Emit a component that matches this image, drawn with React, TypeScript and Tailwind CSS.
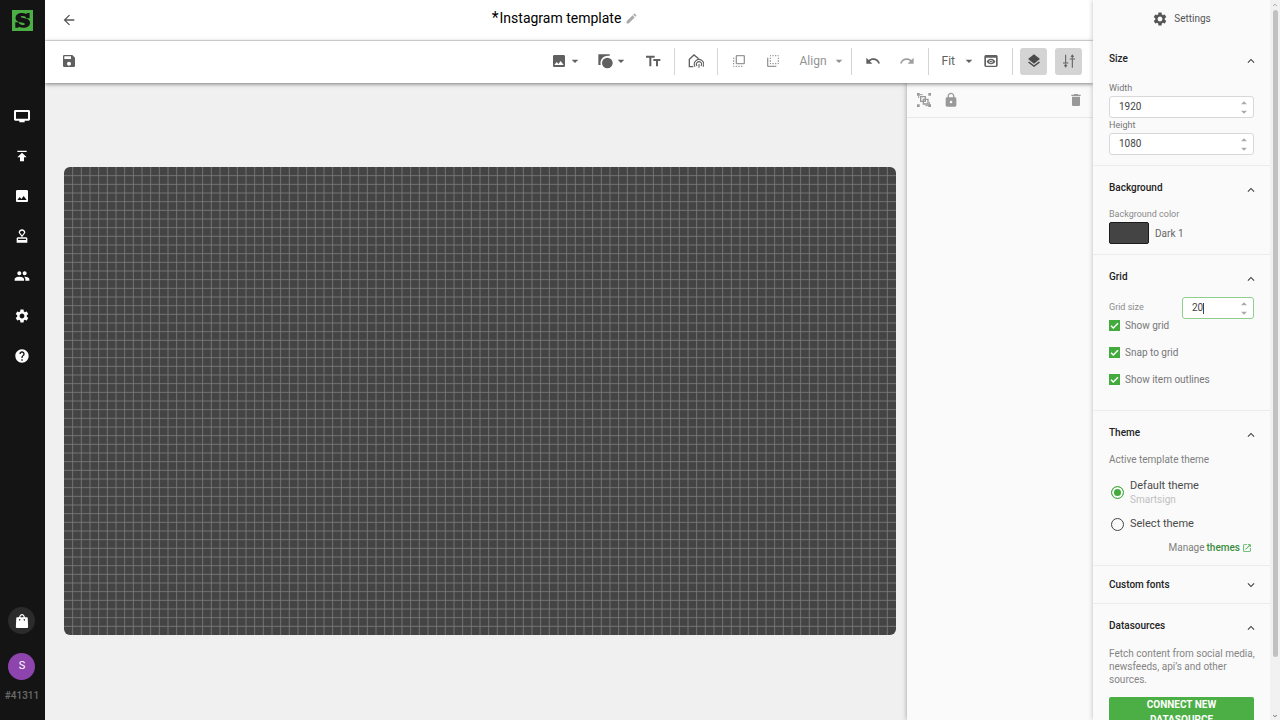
import { useState, type ReactNode } from "react";
import {
  MdArrowBack,
  MdArrowDropDown,
  MdArrowDropUp,
  MdDelete,
  MdEdit,
  MdExpandLess,
  MdExpandMore,
  MdFlipToBack,
  MdFlipToFront,
  MdHelp,
  MdImage,
  MdLaunch,
  MdLayers,
  MdLock,
  MdOutlineApproval,
  MdPeople,
  MdPublish,
  MdRedo,
  MdSave,
  MdSettings,
  MdUndo,
} from "react-icons/md";

const GRID = 20;
const CANVAS_WIDTH = 1920;
const CANVAS_HEIGHT = 1080;

const Logo = () => (
  <svg className="size-[21px]" viewBox="0 0 21 21">
    <rect width="21" height="21" fill="#4caf45" />
    <path
      d="M17.600 3v5.200h-3.200c-.5-1.500-1.900-2.300-3.700-2.300-1.300 0-1.900.4-1.900.9 0 .7.8.9 3.600 1.400 3.700.6 5.600 1.900 5.600 4.600 0 3.200-2.700 5-6.800 5-1.700 0-3.100-.4-4.300-1l-.7.9H3.300v-5.400h3.300c.6 1.700 2.200 2.700 4.200 2.700 1.300 0 2-.4 2-1 0-.7-.9-.9-3.500-1.400C5.500 11.900 3.500 10.700 3.500 8c0-3.100 2.700-5 6.500-5 1.700 0 3.100.4 4.300 1l.8-1z"
      fill="#141414"
    />
  </svg>
);

const ScreenIcon = () => (
  <svg className="size-4" viewBox="0 0 24 24" fill="currentColor">
    <path d="M22 3H2C1 3 0 4 0 5v12c0 1 .9 2 2 2h6v2.500h8V19h6c1 0 2-1 2-2V5c0-1-1-2-2-2zm-1 13H3V6h18z" />
  </svg>
);

const BagIcon = () => (
  <svg className="size-4" viewBox="0 0 24 24" fill="currentColor">
    <path d="M19 6.500h-2.600C16 3.700 14.200 1.500 12 1.500S8 3.700 7.600 6.500H5c-1 0-1.500.7-1.600 1.500L2.800 20.500c0 1.200.8 2 2 2h14.400c1.200 0 2-.8 2-2L20.600 8c0-.8-.6-1.500-1.600-1.500zM12 3.500c1.200 0 2.200 1.300 2.500 3h-5c.3-1.700 1.300-3 2.500-3zM8.500 11.500c-.8 0-1.200-.6-1.200-1.300s.4-1.200 1.200-1.200 1.200.5 1.200 1.200-.4 1.300-1.200 1.300zm7 0c-.8 0-1.200-.6-1.200-1.300s.4-1.200 1.200-1.200 1.200.5 1.200 1.200-.4 1.300-1.200 1.300z" />
  </svg>
);

const ShapeIcon = () => (
  <svg className="size-4" viewBox="0 0 24 24" fill="currentColor">
    <path d="M2 2h17v2.500C10 3 4 9.500 5.500 18H2z" />
    <circle cx="15.500" cy="15" r="8" />
  </svg>
);

const TextIcon = () => (
  <svg className="size-4" viewBox="0 0 24 24" fill="currentColor">
    <path d="M1.500 4v3h5v13h3V7h5V4zM12.500 9v3h4v8h3v-8H23V9z" />
  </svg>
);

const HomeSignalIcon = () => (
  <svg className="size-4" viewBox="0 0 24 24" fill="none" stroke="currentColor">
    <path d="M8 20.500H2V9.500L9 3l7 5.500" strokeWidth="2" />
    <g strokeWidth="1.600">
      <path d="M10.500 20.500a7 7 0 1 1 12 0" />
      <path d="M13.500 19.500a3.900 3.900 0 1 1 6 0" />
      <path d="M16.500 16.500V22" />
    </g>
  </svg>
);

const PreviewIcon = () => (
  <svg className="size-4" viewBox="0 0 24 24" fill="currentColor">
    <path
      fillRule="evenodd"
      d="M4.500 3h15C20.900 3 22 4 22 5.200v13.600c0 1.200-1.100 2.200-2.500 2.200h-15C3.100 21 2 20 2 18.800V5.200C2 4 3.100 3 4.500 3zM4.500 7v12h15V7zM12 8.500c3 0 5.300 1.600 6.500 4.300-1.200 2.700-3.500 4.200-6.500 4.200s-5.300-1.500-6.500-4.200C6.700 10.100 9 8.500 12 8.500zm0 1.800a2.600 2.600 0 1 0 0 5.200 2.600 2.600 0 0 0 0-5.200z"
    />
    <circle cx="12" cy="12.900" r="1.500" />
  </svg>
);

const AdjustIcon = () => (
  <svg className="size-4" viewBox="0 0 24 24" fill="none" stroke="currentColor" strokeWidth="1.600">
    <path d="M7 2.500v12M3 15h8M7 16v4M17 22V9.500M13 9h8M17 8V4" />
    <path d="M5 18.500h4l-2 3zM15 5.500h4l-2-3z" fill="currentColor" strokeWidth="1" />
  </svg>
);

const GroupIcon = () => (
  <svg className="size-4" viewBox="0 0 24 24" fill="none" stroke="currentColor" strokeWidth="2">
    <path d="M7 7h7v7H7zM11 11h7v7h-7z" />
    <path d="M5 4h5M4 5v4M20 15v5M14 20.500h6" strokeWidth="1.500" />
    <path
      d="M1.500 1.500h4v4h-4zM18.500 1.500h4v4h-4zM1.500 18.500h4v4h-4zM18.500 18.500h4v4h-4z"
      fill="currentColor"
      stroke="none"
    />
  </svg>
);

const navItems = [
  { label: "Screens", icon: <ScreenIcon /> },
  { label: "Publish", icon: <MdPublish size={16} /> },
  { label: "Media", icon: <MdImage size={16} /> },
  { label: "Approvals", icon: <MdOutlineApproval size={16} /> },
  { label: "Users", icon: <MdPeople size={16} /> },
  { label: "Settings", icon: <MdSettings size={16} /> },
  { label: "Help", icon: <MdHelp size={16} /> },
];

const Sidebar = () => (
  <nav className="flex w-[45px] shrink-0 flex-col items-center bg-[#141414] pt-[10px] pr-px pb-[18px] text-white">
    <a href="#" aria-label="Home">
      <Logo />
    </a>
    <ul className="mt-[77px] flex flex-col gap-6">
      {navItems.map(({ label, icon }) => (
        <li key={label}>
          <a href="#" aria-label={label} className="block">
            {icon}
          </a>
        </li>
      ))}
    </ul>
    <div className="mt-auto flex flex-col items-center">
      <button aria-label="Store" className="flex size-[27px] items-center justify-center rounded-full bg-[#2b2b2b]">
        <BagIcon />
      </button>
      <button className="mt-[19px] size-[27px] rounded-full bg-[#8e44ad] text-[11px]">S</button>
      <span className="mt-[10px] text-[10px] leading-[12px] font-medium text-[#6b6b6b]">#41311</span>
    </div>
  </nav>
);

const Header = () => (
  <header className="flex h-[41px] shrink-0 items-center border-b border-[#e4e4e4] bg-white px-4">
    <button aria-label="Back" className="text-[#555]">
      <MdArrowBack size={16} />
    </button>
    <div className="flex flex-1 items-center justify-center pr-6 pb-1">
      <h1 className="flex gap-px text-[14px] leading-5 text-black">
        <span className="text-[16px]">*</span>
        Instagram template
      </h1>
      <button aria-label="Rename" className="ml-1 text-[#aaa]">
        <MdEdit size={13} />
      </button>
    </div>
  </header>
);

const Divider = () => <div className="h-[27px] w-px bg-[#d4d4d4]" />;

const Toolbar = () => (
  <div className="relative z-10 flex h-[42px] shrink-0 items-center justify-between bg-white pr-[11px] pb-[2px] pl-4 text-[#606060] shadow-[0_1px_4px_rgba(0,0,0,0.5)]">
    <button aria-label="Save">
      <MdSave size={16} />
    </button>
    <div className="flex items-center">
      <button aria-label="Add media" className="flex items-center">
        <MdImage size={16} />
        <MdArrowDropDown size={16} />
      </button>
      <button aria-label="Add shape" className="ml-[14px] flex items-center">
        <ShapeIcon />
        <MdArrowDropDown size={16} />
      </button>
      <button aria-label="Add text" className="mr-[13px] ml-4">
        <TextIcon />
      </button>
      <Divider />
      <button aria-label="Add widget" className="mx-[13px]">
        <HomeSignalIcon />
      </button>
      <Divider />
      <button aria-label="Bring to front" className="ml-[13px] text-[#999]">
        <MdFlipToFront size={16} />
      </button>
      <button aria-label="Send to back" className="ml-[18px] text-[#999]">
        <MdFlipToBack size={16} />
      </button>
      <button className="ml-[18px] flex items-center gap-1 text-[12px] text-[#929292]">
        Align
        <MdArrowDropDown size={16} />
      </button>
      <div className="mr-[13px] ml-1">
        <Divider />
      </div>
      <button aria-label="Undo">
        <MdUndo size={16} />
      </button>
      <button aria-label="Redo" className="mr-[13px] ml-[18px] text-[#a0a0a0]">
        <MdRedo size={16} />
      </button>
      <Divider />
      <button className="ml-[13px] flex items-center gap-[6px] text-[12px]">
        Fit
        <MdArrowDropDown size={16} />
      </button>
      <button aria-label="Preview" className="mr-[13px] ml-[6px]">
        <PreviewIcon />
      </button>
      <Divider />
      <button aria-label="Layers" className="ml-[7px] flex size-[27px] items-center justify-center rounded-[3px] bg-[#d4d4d4] text-[#4a4a4a]">
        <MdLayers size={16} />
      </button>
      <button aria-label="Properties" className="ml-2 flex size-[27px] items-center justify-center rounded-[3px] bg-[#d4d4d4]">
        <AdjustIcon />
      </button>
    </div>
  </div>
);

const Canvas = () => {
  const columns = Array.from({ length: CANVAS_WIDTH / GRID - 1 }, (_, i) => (i + 1) * GRID);
  const rows = Array.from({ length: CANVAS_HEIGHT / GRID - 1 }, (_, i) => (i + 1) * GRID);

  return (
    <main className="flex min-w-0 flex-1 items-center bg-[#f0f0f0] pr-[11px] pb-[2px] pl-[19px]">
      <svg className="w-full rounded-[6px] bg-[#444]" viewBox={`0 0 ${CANVAS_WIDTH} ${CANVAS_HEIGHT}`}>
        <g stroke="#7b7b7b" strokeWidth="2">
          {columns.map((x) => (
            <line key={x} x1={x} x2={x} y1="0" y2={CANVAS_HEIGHT} />
          ))}
          {rows.map((y) => (
            <line key={y} x1="0" x2={CANVAS_WIDTH} y1={y} y2={y} />
          ))}
        </g>
      </svg>
    </main>
  );
};

const LayersPanel = () => (
  <aside className="w-[186px] shrink-0 bg-[#fafafa] shadow-[0_0_5px_rgba(0,0,0,0.35)]">
    <div className="flex h-[35px] items-center border-b border-[#e8e8e8] px-[9px] text-[#999]">
      <button aria-label="Group">
        <GroupIcon />
      </button>
      <button aria-label="Lock" className="ml-[11px]">
        <MdLock size={16} />
      </button>
      <button aria-label="Delete" className="ml-auto">
        <MdDelete size={16} />
      </button>
    </div>
  </aside>
);

type SectionProps = {
  title: string;
  className?: string;
  children: ReactNode;
};

const Section = ({ title, className = "", children }: SectionProps) => (
  <section className={`border-b border-[#ececec] px-4 pt-[11px] ${className}`}>
    <div className="flex h-5 items-center justify-between">
      <h2 className="text-[10px] font-medium text-[#222]">{title}</h2>
      <button aria-label={`Collapse ${title}`} className="-mr-1 pt-[5px] text-[#444]">
        <MdExpandLess size={14} />
      </button>
    </div>
    {children}
  </section>
);

type NumberInputProps = {
  id: string;
  initial: string;
  active?: boolean;
};

const NumberInput = ({ id, initial, active }: NumberInputProps) => {
  const [value, setValue] = useState(initial);

  return (
    <div className={`relative flex h-[22px] items-center rounded-[3px] border bg-white ${active ? "border-[#8fce8c]" : "border-[#d8d8d8]"}`}>
      <input
        id={id}
        type="number"
        value={value}
        onChange={(e) => setValue(e.target.value)}
        className="w-full min-w-0 appearance-none bg-transparent pl-[9px] text-[10px] leading-4 text-[#444] outline-none [appearance:textfield] [&::-webkit-inner-spin-button]:appearance-none"
      />
      {active && <span className="absolute left-5 h-[11px] w-px bg-[#444]" />}
      <div className="absolute right-[2px] flex flex-col text-[#aaa]">
        <button aria-label="Increase" className="flex h-[9px] items-center">
          <MdArrowDropUp size={14} />
        </button>
        <button aria-label="Decrease" className="flex h-[9px] items-center">
          <MdArrowDropDown size={14} />
        </button>
      </div>
    </div>
  );
};

const Checkbox = ({ label }: { label: string }) => (
  <label className="flex h-3 items-center gap-[5px] text-[10px] text-[#777]">
    <span className="relative flex size-[11px]">
      <input type="checkbox" defaultChecked className="peer size-[11px] appearance-none border border-[#43ab3e] checked:bg-[#43ab3e]" />
      <svg className="pointer-events-none absolute inset-0 hidden size-[11px] peer-checked:block" viewBox="0 0 11 11" fill="none" stroke="#fff" strokeWidth="1.400">
        <path d="M2 5.700l2.300 2.300L9 3.200" />
      </svg>
    </span>
    {label}
  </label>
);

type ThemeOptionProps = {
  label: string;
  note?: string;
  defaultChecked?: boolean;
};

const ThemeOption = ({ label, note, defaultChecked }: ThemeOptionProps) => (
  <label className="ml-[2px] flex items-center gap-[6px]">
    <input
      type="radio"
      name="theme"
      defaultChecked={defaultChecked}
      className="size-[13px] appearance-none rounded-full border border-[#444] checked:border-[#43ab3e] checked:bg-[#43ab3e] checked:shadow-[inset_0_0_0_2px_#fafafa]"
    />
    <span className="flex flex-col">
      <span className="text-[11px] leading-4 text-[#4a4a4a]">{label}</span>
      {note && <span className="text-[10px] leading-3 text-[#c0c0c0]">{note}</span>}
    </span>
  </label>
);

const SettingsPanel = () => (
  <aside className="relative z-20 flex w-[187px] shrink-0 overflow-hidden bg-[#fafafa] shadow-[0_0_5px_rgba(0,0,0,0.25)]">
    <div className="min-w-0 flex-1 overflow-hidden">
      <div className="flex h-[37px] items-center justify-center gap-[6px] text-[10px] text-[#555]">
        <MdSettings size={16} />
        Settings
      </div>

      <Section title="Size" className="pb-[10px]">
        <label htmlFor="width" className="mt-[14px] mb-[2px] block text-[9px] leading-3 text-[#777]">
          Width
        </label>
        <NumberInput id="width" initial="1920" />
        <label htmlFor="height" className="mt-[1px] mb-[2px] block text-[9px] leading-3 text-[#777]">
          Height
        </label>
        <NumberInput id="height" initial="1080" />
      </Section>

      <Section title="Background" className="pb-[10px]">
        <p className="mt-[11px] mb-[2px] text-[9px] leading-3 text-[#8a8a8a]">Background color</p>
        <button className="flex items-center gap-[6px] text-[10px] text-[#666]">
          <span className="h-[22px] w-10 rounded-[2px] border border-[#1c1c1c] bg-[#444]" />
          Dark 1
        </button>
      </Section>

      <Section title="Grid" className="pb-[25px]">
        <div className="mt-[11px] flex items-center justify-between">
          <label htmlFor="grid-size" className="text-[9px] text-[#8a8a8a]">
            Grid size
          </label>
          <div className="w-[72px]">
            <NumberInput id="grid-size" initial="20" active />
          </div>
        </div>
        <div className="flex flex-col gap-[15px]">
          <Checkbox label="Show grid" />
          <Checkbox label="Snap to grid" />
          <Checkbox label="Show item outlines" />
        </div>
      </Section>

      <Section title="Theme" className="pb-[10px]">
        <p className="my-3 text-[10px] leading-3 text-[#808080]">Active template theme</p>
        <div className="flex flex-col gap-[10px]">
          <ThemeOption label="Default theme" note="Smartsign" defaultChecked />
          <ThemeOption label="Select theme" />
        </div>
        <p className="mt-[9px] mr-[2px] flex items-center justify-end gap-[2px] text-[10px] leading-[14px] text-[#808080]">
          Manage
          <a href="#" className="flex items-center gap-[2px] font-medium text-[#388e3c]">
            themes
            <MdLaunch size={10} className="text-[#4caf50]" />
          </a>
        </p>
      </Section>

      <section className="flex h-[38px] items-center justify-between border-b border-[#ececec] px-4">
        <h2 className="text-[10px] font-medium text-[#222]">Custom fonts</h2>
        <button aria-label="Expand Custom fonts" className="-mr-1 pt-px text-[#444]">
          <MdExpandMore size={14} />
        </button>
      </section>

      <Section title="Datasources" className="pb-4">
        <p className="-mr-2 mt-3 text-[10px] leading-[13px] text-[#858585]">Fetch content from social media, newsfeeds, api’s and other sources.</p>
        <button className="mt-[11px] w-full rounded-[2px] bg-[#4caf45] px-8 text-[10px] leading-[15px] font-bold text-white">
          CONNECT NEW DATASOURCE
        </button>
      </Section>
    </div>

    <div className="flex w-[10px] flex-col items-center bg-[#f1f1f1] text-[#555]">
      <MdExpandLess size={8} className="my-[1px] text-[#999]" />
      <div className="w-[5px] grow rounded-full bg-[#c1c1c1]" />
      <div className="flex h-[63px] items-end">
        <MdExpandMore size={8} />
      </div>
    </div>
  </aside>
);

export default function App() {
  return (
    <div className="flex h-screen overflow-hidden bg-[#f0f0f0] font-[Roboto,sans-serif]">
      <Sidebar />
      <div className="flex min-w-0 flex-1 flex-col">
        <Header />
        <Toolbar />
        <div className="flex min-h-0 flex-1">
          <Canvas />
          <LayersPanel />
        </div>
      </div>
      <SettingsPanel />
    </div>
  );
}
